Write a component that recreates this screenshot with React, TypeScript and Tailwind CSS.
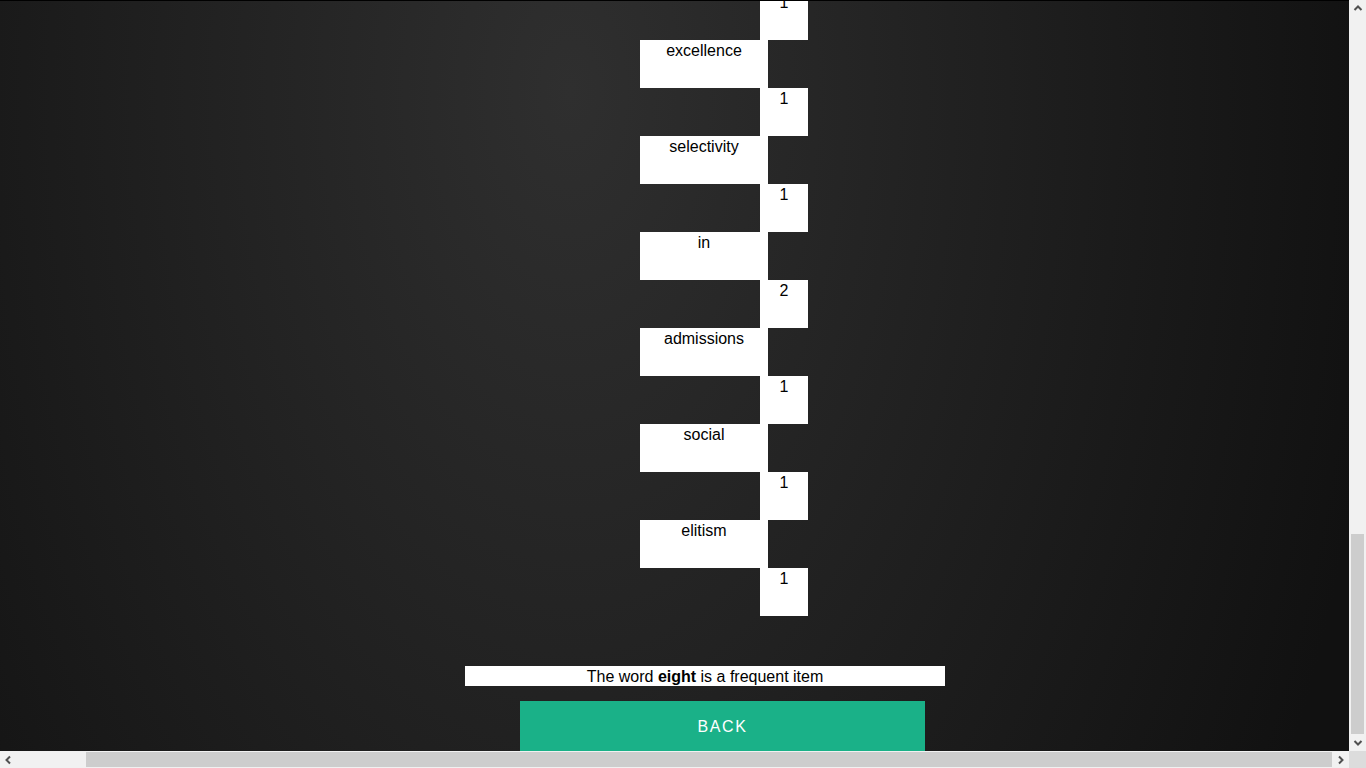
const rows: { word?: string; count: string }[] = [
  { count: "1" },
  { word: "excellence", count: "1" },
  { word: "selectivity", count: "1" },
  { word: "in", count: "2" },
  { word: "admissions", count: "1" },
  { word: "social", count: "1" },
  { word: "elitism", count: "1" },
];

function Chevron({ dir }: { dir: "up" | "down" | "left" | "right" }) {
  const d = {
    up: "M1.5 6 L5 2.5 L8.5 6",
    down: "M1.5 3 L5 6.5 L8.5 3",
    left: "M6 1.5 L2.5 5 L6 8.5",
    right: "M3 1.5 L6.5 5 L3 8.5",
  }[dir];
  return (
    <svg width="10" height="10" viewBox="0 0 10 10">
      <path d={d} fill="none" stroke="#505050" strokeWidth="2" />
    </svg>
  );
}

export default function App() {
  return (
    <div
      className="w-[1366px] h-[768px] overflow-hidden flex flex-col"
      style={{ fontFamily: '"Liberation Sans", Arial, sans-serif' }}
    >
      <div className="flex h-[751px]">
        {/* page viewport, scrolled to the bottom */}
        <div className="w-[1349px] h-full overflow-hidden border-t border-black bg-[radial-gradient(ellipse_820px_1400px_at_570px_90px,#2f2f2f_0%,#111111_100%)]">
          <div className="ml-[465px] w-[480px] -mt-[9px] flex flex-col">
            {rows.map((r, i) => (
              <div key={i} className="flex flex-col">
                {r.word && (
                  <div className="ml-[175px] w-[128px] h-[48px] pt-[2px] bg-white text-black text-base text-center leading-[normal]">
                    {r.word}
                  </div>
                )}
                <div className="ml-[295px] w-[48px] h-[48px] pt-[2px] bg-white text-black text-base text-center leading-[normal]">
                  {r.count}
                </div>
              </div>
            ))}
            <p className="mt-[50px] h-[20px] pt-[1px] bg-white text-black text-base text-center leading-[20px]">
              The word <b>eight</b> is a frequent item
            </p>
            <button className="mt-[15px] ml-[55px] w-[405px] h-[50px] pt-[2px] bg-[#1ab188] text-white text-base tracking-[0.1em] uppercase">
              Back
            </button>
          </div>
        </div>
        {/* vertical scrollbar */}
        <div className="w-[17px] h-full bg-[#f1f1f1] flex flex-col">
          <div className="h-[17px] flex items-center justify-center">
            <Chevron dir="up" />
          </div>
          <div className="flex-1 flex flex-col justify-end px-[2px]">
            <div className="h-[200px] bg-[#cdcdcd]" />
          </div>
          <div className="h-[17px] flex items-center justify-center">
            <Chevron dir="down" />
          </div>
        </div>
      </div>
      {/* horizontal scrollbar */}
      <div className="flex h-[17px]">
        <div className="w-[1349px] bg-[#f1f1f1] flex items-center">
          <div className="w-[17px] h-full flex items-center justify-center">
            <Chevron dir="left" />
          </div>
          <div className="flex-1 h-full flex justify-end py-[1px]">
            <div className="w-[1246px] h-[15px] bg-[#cdcdcd]" />
          </div>
          <div className="w-[17px] h-full flex items-center justify-center">
            <Chevron dir="right" />
          </div>
        </div>
        <div className="w-[17px] h-full bg-[#dcdcdc]" />
      </div>
    </div>
  );
}
